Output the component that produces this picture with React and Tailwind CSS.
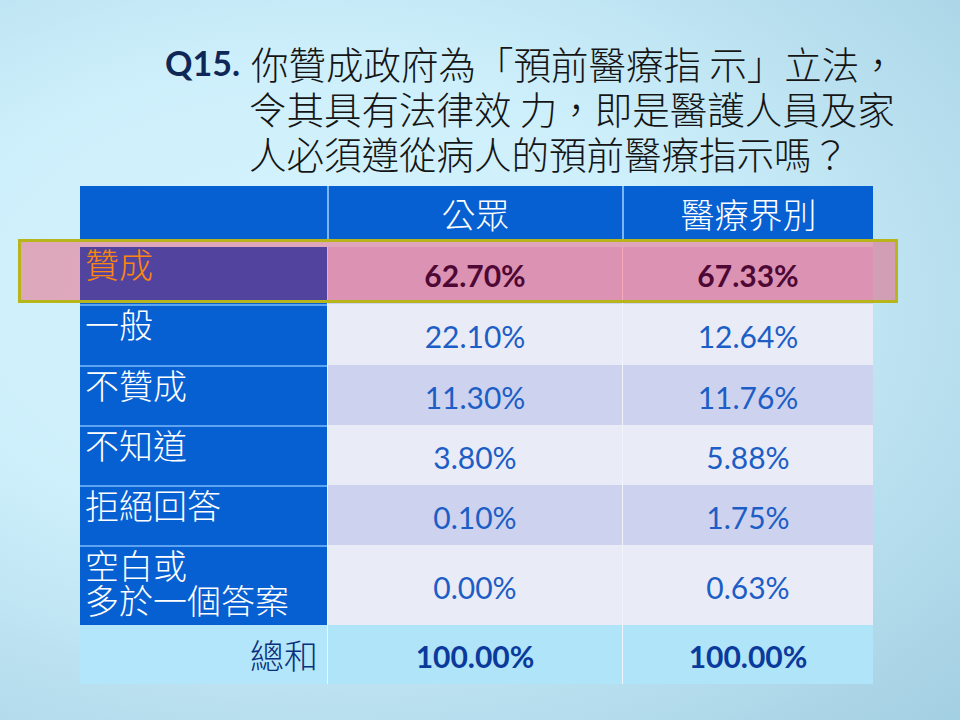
import React from "react";

const cjk = { fontFamily: '"Noto Sans CJK TC", "Noto Sans CJK SC", sans-serif' };
const num = { fontFamily: 'Lato, "Open Sans", sans-serif' };

function LabelCell({ lines, color = "text-white", extra = "pt-[1px] leading-[34px]" }) {
  return (
    <div
      className={`w-[247px] shrink-0 bg-[#0760d2] border-t-2 border-[#5ca4f2] pl-[5px] text-[34px] font-light ${color} ${extra}`}
      style={cjk}
    >
      {lines.map((l) => (
        <div key={l} className="whitespace-nowrap">{l}</div>
      ))}
    </div>
  );
}

function ValueCell({ value, bg, color = "text-[#1c5ec6]", weight = "font-normal" }) {
  return (
    <div
      className={`flex-1 flex items-center justify-center pt-[4px] border-l border-[#f2f4fc] ${bg} ${color} ${weight} text-[30px]`}
      style={num}
    >
      {value}
    </div>
  );
}

export default function App() {
  return (
    <div className="relative w-[960px] h-[720px] overflow-hidden bg-[radial-gradient(ellipse_at_32%_42%,#d6f5fe_0%,#cdeffb_42%,#a3cfe2_100%)]">
      {/* Title */}
      <div className="flex pl-[165px] pt-[40px] text-[37.5px] leading-[45px]">
        <div className="w-[86px] shrink-0 font-bold text-[34px] text-[#0f2756]" style={num}>
          Q15.
        </div>
        <div className="text-[#151515] font-light" style={cjk}>
          <div className="whitespace-nowrap">你贊成政府為「預前醫療指 示」立法，</div>
          <div className="whitespace-nowrap -ml-[2px]">令其具有法律效 力，即是醫護人員及家</div>
          <div className="whitespace-nowrap -ml-[2px]">人必須遵從病人的預前醫療指示嗎？</div>
        </div>
      </div>

      {/* Table */}
      <div className="ml-[80px] mt-[11px] w-[793px] flex flex-col">
        {/* Header */}
        <div className="flex h-[55px] bg-[#0760d2] text-white text-[34px] font-light" style={cjk}>
          <div className="w-[247px] shrink-0" />
          <div className="w-[295px] shrink-0 flex items-center justify-center border-l-2 border-[#7cb6f2]">公眾</div>
          <div className="flex-1 flex items-center justify-center border-l-2 border-[#7cb6f2]">醫療界別</div>
        </div>

        {/* Row 贊成 */}
        <div className="flex flex-col h-[63px]">
          <div className="h-[6px] bg-[#d2eefb]" />
          <div className="flex flex-1">
            <div
              className="w-[247px] shrink-0 bg-[#0760d2] pl-[5px] pt-[0px] text-[34px] leading-[34px] font-light text-[#ffc000]"
              style={cjk}
            >
              贊成
            </div>
            <div className="w-[295px] shrink-0 flex items-center justify-center border-l border-[#f2f4fc] bg-[#cdd3ef] text-[#000c3c] font-bold text-[30px]" style={num}>
              62.70%
            </div>
            <div className="flex-1 flex items-center justify-center border-l border-[#f2f4fc] bg-[#cdd3ef] text-[#000c3c] font-bold text-[30px]" style={num}>
              67.33%
            </div>
          </div>
        </div>

        {/* Row 一般 */}
        <div className="flex h-[61px]">
          <LabelCell lines={["一般"]} />
          <div className="w-[295px] shrink-0 flex"><ValueCell value="22.10%" bg="bg-[#e9ebf7]" /></div>
          <ValueCell value="12.64%" bg="bg-[#e9ebf7]" />
        </div>

        {/* Row 不贊成 */}
        <div className="flex h-[60px]">
          <LabelCell lines={["不贊成"]} />
          <div className="w-[295px] shrink-0 flex"><ValueCell value="11.30%" bg="bg-[#cdd2ee]" /></div>
          <ValueCell value="11.76%" bg="bg-[#cdd2ee]" />
        </div>

        {/* Row 不知道 */}
        <div className="flex h-[60px]">
          <LabelCell lines={["不知道"]} />
          <div className="w-[295px] shrink-0 flex"><ValueCell value="3.80%" bg="bg-[#e9ebf7]" /></div>
          <ValueCell value="5.88%" bg="bg-[#e9ebf7]" />
        </div>

        {/* Row 拒絕回答 */}
        <div className="flex h-[60px]">
          <LabelCell lines={["拒絕回答"]} />
          <div className="w-[295px] shrink-0 flex"><ValueCell value="0.10%" bg="bg-[#cdd2ee]" /></div>
          <ValueCell value="1.75%" bg="bg-[#cdd2ee]" />
        </div>

        {/* Row 空白或 多於一個答案 */}
        <div className="flex h-[80px]">
          <LabelCell lines={["空白或", "多於一個答案"]} extra="pt-[0px] leading-[35px]" />
          <div className="w-[295px] shrink-0 flex"><ValueCell value="0.00%" bg="bg-[#e9ebf7]" /></div>
          <ValueCell value="0.63%" bg="bg-[#e9ebf7]" />
        </div>

        {/* Total */}
        <div className="flex h-[59px] bg-[#b3e6fa]">
          <div
            className="w-[247px] shrink-0 flex items-center justify-end pr-[9px] text-[34px] font-light text-[#0b2f7a]"
            style={cjk}
          >
            總和
          </div>
          <div className="w-[295px] shrink-0 flex">
            <ValueCell value="100.00%" bg="bg-[#b0e4f8]" color="text-[#0a3a9c]" weight="font-bold" />
          </div>
          <ValueCell value="100.00%" bg="bg-[#b0e4f8]" color="text-[#0a3a9c]" weight="font-bold" />
        </div>
      </div>

      {/* Highlight overlay */}
      <div className="absolute left-[18px] top-[239px] w-[880px] h-[64px] border-[3px] border-[#b8b51c] bg-[rgba(255,0,40,0.3)]" />
    </div>
  );
}
